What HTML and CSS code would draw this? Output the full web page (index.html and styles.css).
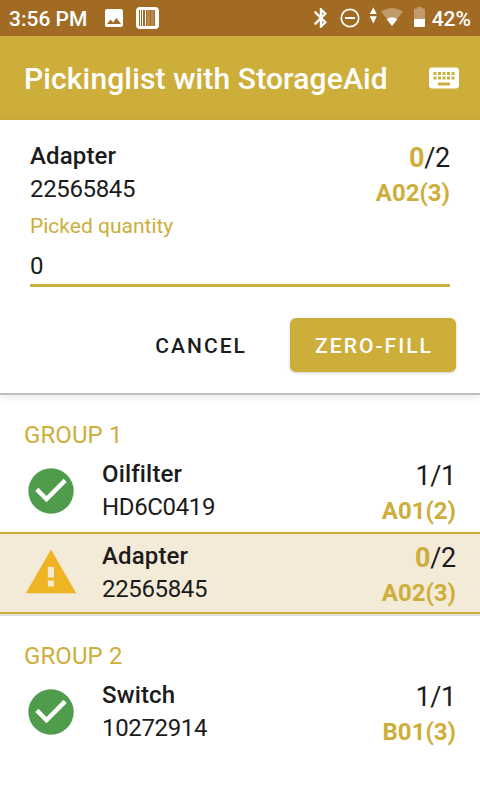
FILE: index.html
```html
<!DOCTYPE html>
<html lang="en">
<head>
<meta charset="utf-8">
<title>Pickinglist with StorageAid</title>
<link rel="stylesheet" href="styles.css">
</head>
<body>
<div class="status">
  <span class="time">3:56 PM</span>
  <svg class="ic-photo" viewBox="3 3 18 18"><path fill="#fff" d="M21 19V5c0-1.100-.9-2-2-2H5c-1.100 0-2 .9-2 2v14c0 1.100.9 2 2 2h14c1.100 0 2-.9 2-2zM8.500 13.500l2.500 3.010L14.500 12l4.500 6H5l3.500-4.500z"/></svg>
  <svg class="ic-barcode" viewBox="0 0 23 22"><rect width="23" height="22" rx="4" fill="#fff"/><path fill="#a16b24" d="M3 3h1v16H3zM5 3h1v16H5zM7 3h2v16H7zM10 3h1v16h-1zM14 3h1v16h-1zM18 3h1v16h-1z"/><path fill="#b58a50" d="M11 3h3v16h-3zM15 3h3v16h-3z"/></svg>
  <span class="spacer"></span>
  <svg class="ic-bt" viewBox="5 2 13 20"><path fill="#fff" stroke="#fff" stroke-width=".4" d="M17.710 7.710L12 2h-1v7.590L6.410 5 5 6.410 10.590 12 5 17.590 6.410 19 11 14.410V22h1l5.710-5.710-4.300-4.290 4.300-4.290zM13 5.830l1.880 1.880L13 9.590V5.830zm1.880 10.460L13 18.170v-3.760l1.880 1.880z"/></svg>
  <svg class="ic-dnd" viewBox="0 0 20 20"><circle cx="10" cy="10" r="8.700" fill="none" stroke="#fff" stroke-width="1.700"/><path fill="#fff" d="M5 9h10v2H5z"/></svg>
  <svg class="ic-arrows" viewBox="0 0 8 18"><path fill="#fff" d="M4.300 .3L7.800 7H.8zM4.300 16.600L.8 9.300h7z"/></svg>
  <svg class="ic-wifi" viewBox="0 0 22 18"><path fill="#fff" fill-opacity=".33" d="M0 3.600Q11-3.600 22 3.600L11 18z"/><path fill="#fff" d="M5.700 11.300Q11 7.300 16.300 11.300L11 18z"/></svg>
  <svg class="ic-batt" viewBox="0 0 11 20"><path fill="#fff" fill-opacity=".33" d="M1 1.500h2.500V0h4v1.500H10a1 1 0 0 1 1 1V12H0V2.500a1 1 0 0 1 1-1z"/><path fill="#fff" d="M0 12h11v7a1 1 0 0 1-1 1H1a1 1 0 0 1-1-1z"/></svg>
  <span>42%</span>
</div>
<header class="appbar">
  <h1>Pickinglist with StorageAid</h1>
  <svg width="36" height="36" viewBox="0 0 24 24"><path fill="#fff" d="M20 5H4c-1.100 0-1.990.9-1.990 2L2 17c0 1.100.9 2 2 2h16c1.100 0 2-.9 2-2V7c0-1.100-.9-2-2-2zm-9 3h2v2h-2V8zm0 3h2v2h-2v-2zM8 8h2v2H8V8zm0 3h2v2H8v-2zm-1 2H5v-2h2v2zm0-3H5V8h2v2zm9 7H8v-2h8v2zm0-4h-2v-2h2v2zm0-3h-2V8h2v2zm3 3h-2v-2h2v2zm0-3h-2V8h2v2z"/></svg>
</header>
<section class="editor">
  <div class="summary">
    <div class="info"><div class="name">Adapter</div><div class="code">22565845</div></div>
    <div class="amount"><div class="count"><b>0</b>/2</div><div class="place">A02(3)</div></div>
  </div>
  <div class="label">Picked quantity</div>
  <div class="field">0</div>
  <div class="actions">
    <button class="btn">CANCEL</button>
    <button class="btn primary">ZERO-FILL</button>
  </div>
</section>
<main>
  <section class="group">
    <h2>GROUP 1</h2>
    <div class="item">
      <svg class="state" viewBox="0 0 24 24"><circle cx="12" cy="12" r="10.080" fill="#4f9c4c"/><path fill="#fff" d="M10 17l-5-5 1.410-1.410L10 14.170l7.590-7.590L19 8z"/></svg>
      <div class="info"><div class="name">Oilfilter</div><div class="code">HD6C0419</div></div>
      <div class="amount"><div class="count">1/1</div><div class="place">A01(2)</div></div>
    </div>
    <div class="item active">
      <svg class="state" viewBox="0 0 24 24"><path fill="#efb423" d="M.8 21h22.400L12 1.500zM13.300 18h-2.700v-2.700h2.700zm0-4h-2.700V9.300h2.700z"/></svg>
      <div class="info"><div class="name">Adapter</div><div class="code">22565845</div></div>
      <div class="amount"><div class="count"><b>0</b>/2</div><div class="place">A02(3)</div></div>
    </div>
  </section>
  <section class="group">
    <h2>GROUP 2</h2>
    <div class="item">
      <svg class="state" viewBox="0 0 24 24"><circle cx="12" cy="12" r="10.080" fill="#4f9c4c"/><path fill="#fff" d="M10 17l-5-5 1.410-1.410L10 14.170l7.590-7.590L19 8z"/></svg>
      <div class="info"><div class="name">Switch</div><div class="code">10272914</div></div>
      <div class="amount"><div class="count">1/1</div><div class="place">B01(3)</div></div>
    </div>
  </section>
</main>
</body>
</html>
```

FILE: styles.css
```css
* { box-sizing: border-box; }
body {
  margin: 0;
  width: 480px;
  height: 800px;
  overflow: hidden;
  background: #fff;
  color: #1b1b1b;
  font-family: Roboto, "Liberation Sans", sans-serif;
  font-size: 24px;
  line-height: 33px;
}
svg { display: block; flex: none; }
.status {
  display: flex;
  align-items: center;
  height: 36px;
  padding: 0 9px 0 9px;
  background: #a16b24;
  color: #fff;
  font-size: 21px;
  font-weight: 500;
  line-height: 36px;
}
.status span { padding-top: 2px; }
.time { width: 96px; }
.ic-photo { width: 18px; height: 18px; }
.ic-barcode { width: 23px; height: 22px; margin-left: 13px; }
.spacer { flex: 1; }
.ic-bt { width: 13px; height: 20px; margin-right: 13px; }
.ic-dnd { width: 20px; height: 20px; margin-right: 9px; }
.ic-arrows { width: 8px; height: 18px; margin: -4px 4px 0 0; }
.ic-wifi { width: 22px; height: 18px; margin: -2px 11px 0 0; }
.ic-batt { width: 11px; height: 20px; margin: -2px 7px 0 0; }

.appbar {
  display: flex;
  align-items: center;
  justify-content: space-between;
  height: 84px;
  padding: 0 18px 0 24px;
  background: #cdae3b;
  color: #fff;
}
h1 { margin: 0; padding-top: 2px; font-size: 30px; font-weight: 500; line-height: 40px; letter-spacing: .13px; }

.editor {
  height: 275px;
  padding: 20px 24px 0 30px;
  border-bottom: 2px solid #bebebe;
  box-shadow: 0 2px 8px rgba(0, 0, 0, .1);
}
.summary { display: flex; justify-content: space-between; margin-right: 6px; height: 72px; }
.name { font-weight: 500; letter-spacing: .15px; }
.code { letter-spacing: -.35px; }
.amount { padding-top: 1px; text-align: right; }
.count { font-size: 27px; line-height: 34px; letter-spacing: -.3px; }
.count b, .place { color: #cdae3b; font-weight: 700; }
.place { line-height: 36px; }
.label { color: #cdae3b; font-size: 21px; line-height: 28px; }
.field {
  height: 47px;
  margin-right: 6px;
  padding-top: 10px;
  border-bottom: 3px solid #cdae3b;
}
.actions { display: flex; justify-content: flex-end; gap: 18px; margin-top: 31px; }
.btn {
  height: 54px;
  padding: 2px 25px 0;
  border: 0;
  border-radius: 6px;
  background: transparent;
  color: #1b1b1b;
  font: 500 21px/52px Roboto, "Liberation Sans", sans-serif;
  letter-spacing: 2.05px;
}
.primary {
  width: 166px;
  padding: 2px 0 0 2px;
  background: #cdae3b;
  color: #fff;
  box-shadow: 0 1px 3px rgba(0, 0, 0, .2);
}

.group + .group { border-top: 2px solid #e0e0e0; }
h2 {
  height: 55px;
  margin: 0;
  padding: 24px 24px 0;
  color: #cdae3b;
  font-size: 24px;
  font-weight: 400;
  letter-spacing: .1px;
}
.item {
  display: flex;
  height: 82px;
  padding: 6px 24px 0;
  border: solid transparent;
  border-width: 2px 0;
}
.active { background: #f3ead8; border-color: #cdae3b; }
.state { width: 54px; height: 54px; margin: 6px 24px 0 0; }
.item .info { flex: 1; }
```
